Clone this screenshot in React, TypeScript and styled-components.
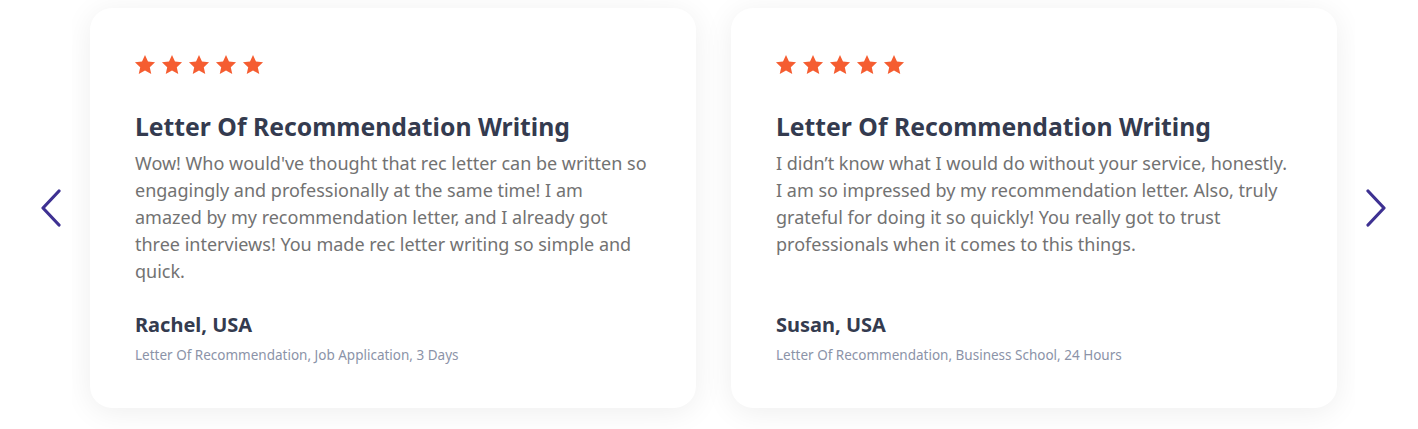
import React from "react";
import styled, { createGlobalStyle } from "styled-components";

const Global = createGlobalStyle`
  html, body { margin: 0; padding: 0; background: #ffffff; }
  body { font-family: "Noto Sans", "Open Sans", sans-serif; }
`;

const Slider = styled.section`
  display: flex;
  align-items: stretch;
  width: 1418px;
  height: 429px;
`;

const ArrowZone = styled.div<{ $w: number; $pad: string }>`
  width: ${(p) => p.$w}px;
  flex: none;
  display: flex;
  align-items: center;
  padding: ${(p) => p.$pad};
  box-sizing: border-box;
`;

const ArrowButton = styled.button`
  border: 0;
  background: none;
  padding: 0;
  margin: 0;
  cursor: pointer;
  display: flex;
  color: #3e3192;
`;

const Viewport = styled.div`
  width: 1283px;
  flex: none;
  overflow: hidden;
  display: flex;
  gap: 35px;
  padding: 8px 18px 21px;
  box-sizing: border-box;
`;

const Card = styled.article`
  width: 606px;
  height: 400px;
  flex: none;
  box-sizing: border-box;
  background: #ffffff;
  border-radius: 22px;
  box-shadow: 0 4px 30px rgba(0, 0, 0, 0.07);
  padding: 46px 45px 0 44px;
  display: flex;
  flex-direction: column;
`;

const Stars = styled.div`
  display: flex;
  gap: 5px;
  height: 22px;
`;

const Title = styled.h3`
  margin: 35px 0 0 1px;
  font-size: 24.75px;
  line-height: 31px;
  font-weight: 700;
  color: #343b4f;
`;

const Body = styled.p`
  margin: 8px 0 0 1px;
  font-size: 18px;
  line-height: 27px;
  color: #727272;
  height: 135px;
`;

const Name = styled.div`
  margin: 27px 0 0 1px;
  font-size: 20px;
  line-height: 26px;
  font-weight: 700;
  color: #343b4f;
`;

const Meta = styled.div`
  margin: 8px 0 0 1px;
  font-size: 13.5px;
  line-height: 18px;
  color: #8b93a8;
`;

const Star = () => (
  <svg width="22" height="22" viewBox="0 0 24 24">
    <path
      fill="#f55d31"
      d="M12 1.2l3.25 7.05 7.7.85-5.72 5.22 1.6 7.58L12 18.05 5.17 21.9l1.6-7.58L1.05 9.1l7.7-.85z"
    />
  </svg>
);

const Chevron = ({ dir }: { dir: "left" | "right" }) => (
  <svg width="22" height="38" viewBox="0 0 22 38" fill="none">
    <path
      d={dir === "left" ? "M19 2 L3 19 L19 36" : "M3 2 L19 19 L3 36"}
      stroke="currentColor"
      strokeWidth="3.2"
      strokeLinecap="round"
      strokeLinejoin="round"
    />
  </svg>
);

const reviews = [
  {
    title: "Letter Of Recommendation Writing",
    text:
      "Wow! Who would've thought that rec letter can be written so engagingly and professionally at the same time! I am amazed by my recommendation letter, and I already got three interviews! You made rec letter writing so simple and quick.",
    name: "Rachel, USA",
    meta: "Letter Of Recommendation, Job Application, 3 Days",
  },
  {
    title: "Letter Of Recommendation Writing",
    text:
      "I didn’t know what I would do without your service, honestly. I am so impressed by my recommendation letter. Also, truly grateful for doing it so quickly! You really got to trust professionals when it comes to this things.",
    name: "Susan, USA",
    meta: "Letter Of Recommendation, Business School, 24 Hours",
  },
];

export default function App() {
  return (
    <>
      <Global />
      <Slider>
        <ArrowZone $w={72} $pad="0 0 14px 40px">
          <ArrowButton aria-label="Previous">
            <Chevron dir="left" />
          </ArrowButton>
        </ArrowZone>
        <Viewport>
          {reviews.map((r, i) => (
            <Card key={i}>
              <Stars>
                {[0, 1, 2, 3, 4].map((s) => (
                  <Star key={s} />
                ))}
              </Stars>
              <Title>{r.title}</Title>
              <Body>{r.text}</Body>
              <Name>{r.name}</Name>
              <Meta>{r.meta}</Meta>
            </Card>
          ))}
        </Viewport>
        <ArrowZone $w={63} $pad="0 0 14px 10px">
          <ArrowButton aria-label="Next">
            <Chevron dir="right" />
          </ArrowButton>
        </ArrowZone>
      </Slider>
    </>
  );
}
